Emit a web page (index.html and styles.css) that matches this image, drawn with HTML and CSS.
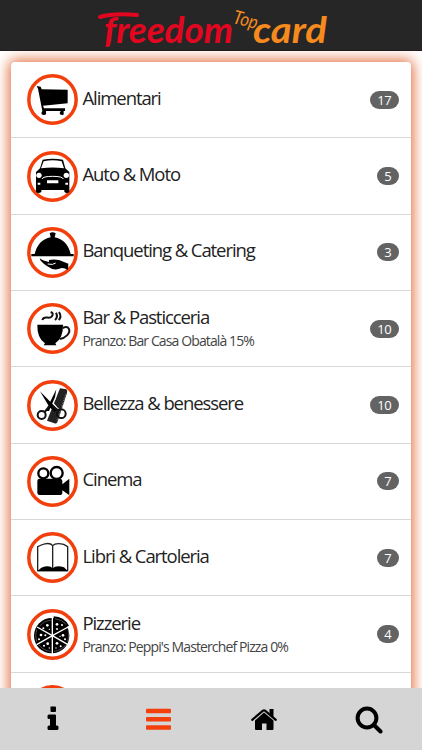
FILE: index.html
```
<!DOCTYPE html>
<html lang="it">
<head>
<meta charset="utf-8">
<title>Freedom Top Card</title>
<link rel="stylesheet" href="styles.css">
</head>
<body>
<div class="app">
<header class="header">
<svg class="logo" viewBox="0 0 236 48" role="img" aria-label="freedom top card">
<g class="word red"><text x="11" y="40" textLength="129" lengthAdjust="spacingAndGlyphs">freedom</text><path d="M7 14Q20 10 44 12"/></g>
<text class="top" x="139" y="20" textLength="25" lengthAdjust="spacingAndGlyphs" transform="rotate(14 139 20)">Top</text>
<g class="word orange"><text x="160" y="40" textLength="74" lengthAdjust="spacingAndGlyphs">card</text></g>
</svg>
</header>
<main class="content">
<ul class="list">
<li class="row"><svg class="icon" viewBox="0 0 153 153"><circle class="ring" cx="76.500" cy="76.500" r="71"/><path d="M29 36L41 38L44 46L122 47V88L48 95L51 103H114V111H110V119Q112 123 105 123Q98 123 98 117L101 111H57V119Q57 123 50 123Q43 123 43 117L46 111L33 44Z"/></svg><div class="text"><h2>Alimentari</h2></div><span class="badge">17</span></li>
<li class="row"><svg class="icon" viewBox="0 0 153 153"><circle class="ring" cx="76.500" cy="76.500" r="71"/><path d="M47 26Q77 20 108 26L115 52L127 63V123Q120 129 112 123V117H43V123Q35 129 27 123V63L39 52Z"/><path class="white" d="M50 31Q77 25 104 31L111 52Q77 47 42 52Z"/><circle class="white" cx="36" cy="73" r="8"/><circle class="white" cx="118" cy="73" r="8"/><path class="wline" d="M45 84Q47 76 77 76Q107 76 109 84"/><path class="white" d="M60 88H94V97H60ZM32 95H40V101H32ZM115 95H123V101H115Z"/></svg><div class="text"><h2>Auto &amp; Moto</h2></div><span class="badge">5</span></li>
<li class="row"><svg class="icon" viewBox="0 0 153 153"><circle class="ring" cx="76.500" cy="76.500" r="71"/><path d="M71 31L68 19Q76 12 86 19L83 31Q120 38 131 81H140V88H13V81H23Q34 38 71 31ZM38 94Q45 100 52 101L66 105V99Q79 96 96 99L124 110L123 129Q108 120 97 125Q80 132 61 118Q40 105 38 94Z"/><path class="wline" d="M62 111Q78 115 86 108"/></svg><div class="text"><h2>Banqueting &amp; Catering</h2></div><span class="badge">3</span></li>
<li class="row"><svg class="icon" viewBox="0 0 153 153"><circle class="ring" cx="76.500" cy="76.500" r="71"/><path d="M31 65H108Q109 104 85 121L88 127H50L54 121Q30 105 31 65Z"/><path class="line" d="M107 75C125 66 134 82 120 97Q110 107 98 108"/><path class="line" d="M46 51C51 35 66 50 74 41Q82 31 71 27M87 29Q94 42 84 51M96 27Q105 42 95 51"/></svg><div class="text"><h2>Bar &amp; Pasticceria</h2><p>Pranzo: Bar Casa Obatalà 15%</p></div><span class="badge">10</span></li>
<li class="row"><svg class="icon" viewBox="0 0 153 153"><circle class="ring" cx="76.500" cy="76.500" r="71"/><path class="combbody" d="M99 25L118 28Q122 30 120 38L91 127Q88 132 82 130L60 122Z"/><path class="comb" d="M117 42L90 124"/><path class="halo" d="M41 35L91 91M85 31L80 54L57 95"/><path d="M39 34L94 90L84 96L67 81ZM88 28L84 52L66 93L56 93Z"/><circle class="line" cx="44" cy="105" r="12"/><circle class="line" cx="103" cy="101" r="13"/><path class="line" d="M53 96L66 80M94 92L77 79"/></svg><div class="text"><h2>Bellezza &amp; benessere</h2></div><span class="badge">10</span></li>
<li class="row"><svg class="icon" viewBox="0 0 153 153"><circle class="ring" cx="76.500" cy="76.500" r="71"/><circle class="reel" cx="49" cy="52" r="15"/><circle class="reel" cx="89" cy="51" r="18"/><path d="M36 68H98Q106 68 106 76V85L127 68V118L106 103V110Q106 117 98 117H38Q31 117 31 110V76Q31 68 36 68Z"/></svg><div class="text"><h2>Cinema</h2></div><span class="badge">7</span></li>
<li class="row"><svg class="icon" viewBox="0 0 153 153"><circle class="ring" cx="76.500" cy="76.500" r="71"/><path class="book" d="M77 41Q68 29 43 39L32 44V116H122V44L110 37Q86 31 77 41V111"/><path d="M31 118L43 107Q68 98 77 109Q88 98 111 106L123 118Z"/></svg><div class="text"><h2>Libri &amp; Cartoleria</h2></div><span class="badge">7</span></li>
<li class="row"><svg class="icon" viewBox="0 0 153 153"><circle class="ring" cx="76.500" cy="76.500" r="71"/><circle cx="74" cy="80" r="53"/><path d="M80 77V22Q111 23 126 50Z"/><path class="slice" d="M76 80V20M76 80L129 51M76 80V136M76 80L123 107M76 80L29 107M76 80L30 54"/><path class="crust" d="M71 34Q49 36 38 52M29 61Q23 79 29 98M36 108Q49 125 71 127M81 127Q104 124 116 108M122 98Q127 82 124 64M84 29Q105 32 118 46"/><g class="white"><circle cx="61" cy="49" r="4"/><circle cx="49" cy="58" r="3"/><circle cx="67" cy="61" r="2"/><circle cx="90" cy="46" r="4"/><circle cx="105" cy="48" r="3"/><circle cx="90" cy="60" r="3"/><circle cx="42" cy="78" r="4"/><circle cx="36" cy="91" r="3"/><circle cx="55" cy="79" r="3"/><circle cx="108" cy="79" r="4"/><circle cx="114" cy="91" r="3"/><circle cx="99" cy="82" r="2"/><circle cx="62" cy="104" r="4"/><circle cx="51" cy="110" r="3"/><circle cx="67" cy="117" r="2"/><circle cx="90" cy="103" r="4"/><circle cx="101" cy="112" r="3"/><circle cx="87" cy="117" r="2"/></g></svg><div class="text"><h2>Pizzerie</h2><p>Pranzo: Peppi's Masterchef Pizza 0%</p></div><span class="badge">4</span></li>
<li class="row"><svg class="icon" viewBox="0 0 153 153"><circle class="ring" cx="76.500" cy="76.500" r="71"/></svg></li>
</ul>
</main>
<nav class="tabs">
<a class="tab"><svg viewBox="0 0 30 30"><path d="M12.500 2.500H17Q18 2.500 18 3.500V7Q18 8 17 8H13.500Q12.500 8 12.500 7ZM11 10.500H17Q18 10.500 18 11.500V21.500H19Q20.500 21.500 20.500 23V24.500Q20.500 26 19 26H11Q9.500 26 9.500 24.500V23Q9.500 21.500 11 21.500H12V15H11Q9.500 15 9.500 13.500V12Q9.500 10.500 11 10.500Z"/></svg></a>
<a class="tab active"><svg viewBox="0 0 30 30"><rect x="3" y="4.700" width="25" height="4.500" rx="1"/><rect x="3" y="13" width="25" height="4.500" rx="1"/><rect x="3" y="21.300" width="25" height="4.500" rx="1"/></svg></a>
<a class="tab"><svg viewBox="0 0 30 30"><path d="M15 8.500L24.500 16.500V25Q24.500 26 23.500 26H17.500V19.500H13V26H7Q6 26 6 25V16.500Z"/><path class="roof" d="M3.200 15.800L14 6.700Q15 5.900 16 6.700L26.800 15.800"/><path d="M20.500 5H24.500V13L20.500 9.600Z"/></svg></a>
<a class="tab"><svg viewBox="0 0 30 30"><circle class="lens" cx="13" cy="14" r="9.400"/><path class="handle" d="M20 21L26.500 27.500"/></svg></a>
</nav>
</div>
</body>
</html>
```
FILE: styles.css
```
* { box-sizing: border-box; }
body { margin: 0; background: #fff; color: #222; font-family: "Open Sans", sans-serif; }
.app { width: 422px; height: 750px; display: flex; flex-direction: column; overflow: hidden; }
.header { height: 51px; flex: none; background: #262626; border-bottom: 1px solid #211c20; display: flex; justify-content: center; align-items: flex-start; padding-top: 3px; }
.logo { width: 236px; height: 48px; overflow: visible; }
.word text { font: italic 700 37px Lato, sans-serif; }
.word path { fill: none; stroke-width: 4; stroke-linecap: round; }
.red { fill: #e30620; }
.red path { stroke: #e30620; }
.orange { fill: #f68a1e; }
.top { font: italic 400 19px Lato, sans-serif; fill: #f68a1e; }
.content { flex: 1; min-height: 0; overflow: hidden; padding: 11px 11px 0; background: #fff; }
.list { margin: 0; padding: 0; list-style: none; height: 700px; background: #fff; border-radius: 4px; box-shadow: 0 0 14px 2px #e06a38; }
.row { display: flex; align-items: center; height: 76.350px; padding: 0 12.500px 0 15.800px; border-bottom: 1px solid #d8d8d8; }
.icon { width: 51px; height: 51px; flex: none; }
.ring { fill: #fff; stroke: #f23f0c; stroke-width: 10.500; }
.white { fill: #fff; }
.wline, .line, .reel, .book, .comb, .slice, .crust, .halo { fill: none; }
.wline { stroke: #fff; stroke-width: 3; }
.halo { stroke: #fff; stroke-width: 13; }
.line { stroke: #111; stroke-width: 6; }
.reel { stroke: #000; stroke-width: 7; }
.book { stroke: #222; stroke-width: 4; }
.combbody { fill: #222; }
.comb { stroke: #777; stroke-width: 5; stroke-dasharray: 2 3; }
.slice { stroke: #fff; stroke-width: 4; }
.crust { stroke: #999; stroke-width: 1.500; }
.text { flex: 1; margin-left: 4.700px; padding-bottom: 5px; white-space: nowrap; }
h2 { margin: 0; font-size: 18.500px; line-height: 25px; font-weight: 400; letter-spacing: -1.080px; }
p { margin: 2px 0 -3px; font-size: 14px; line-height: 20px; letter-spacing: -0.880px; color: #444; }
.badge { height: 18px; min-width: 21px; padding: 0 7px; border-radius: 9px; background: #636363; color: #fff; font-size: 13px; line-height: 18px; letter-spacing: -0.300px; text-align: center; }
.tabs { height: 62px; flex: none; display: grid; grid-template-columns: repeat(4, 1fr); background: #d5d5d5; position: relative; }
.tab { display: flex; align-items: center; justify-content: center; fill: #000; }
.tab svg { width: 30px; height: 30px; }
.active { fill: #f23f0c; }
.roof { fill: none; stroke: #000; stroke-width: 2.200; stroke-linecap: round; }
.lens { fill: none; stroke: #000; stroke-width: 4; }
.handle { stroke: #000; stroke-width: 4; stroke-linecap: round; }
```
